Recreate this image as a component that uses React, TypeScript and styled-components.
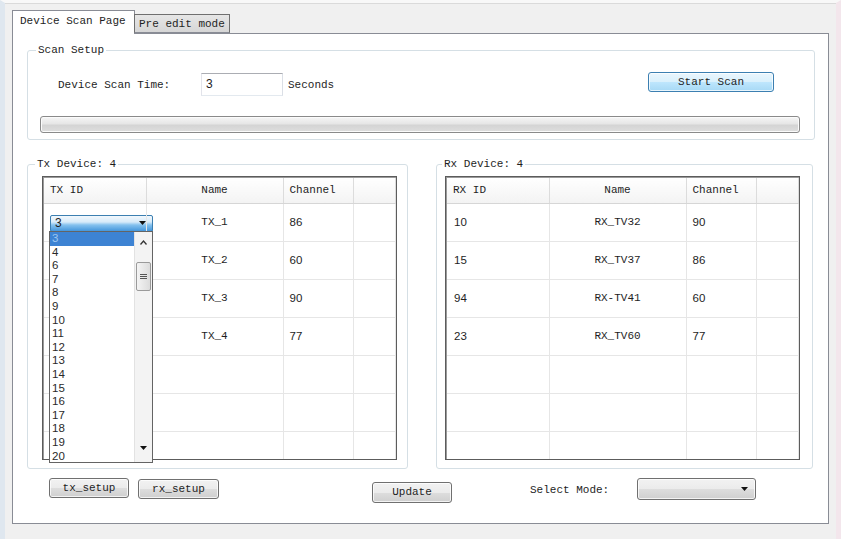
import styled, { createGlobalStyle } from "styled-components"

const GlobalStyle = createGlobalStyle`
  html, body { margin: 0; padding: 0; background: #f0f0f0; }
  body {
    font-family: "Liberation Mono", "DejaVu Sans Mono", monospace;
    font-size: 11px;
    color: #1e1e1e;
  }
  * { box-sizing: border-box; }
`

const txRows = [
  { id: "", name: "TX_1", ch: "86", editing: true },
  { id: "", name: "TX_2", ch: "60" },
  { id: "", name: "TX_3", ch: "90" },
  { id: "", name: "TX_4", ch: "77" },
  { id: "", name: "", ch: "" },
  { id: "", name: "", ch: "" },
  { id: "", name: "", ch: "" },
]

const rxRows = [
  { id: "10", name: "RX_TV32", ch: "90" },
  { id: "15", name: "RX_TV37", ch: "86" },
  { id: "94", name: "RX-TV41", ch: "60" },
  { id: "23", name: "RX_TV60", ch: "77" },
  { id: "", name: "", ch: "" },
  { id: "", name: "", ch: "" },
  { id: "", name: "", ch: "" },
]

const idOptions = ["3", "4", "6", "7", "8", "9", "10", "11", "12", "13", "14", "15", "16", "17", "18", "19", "20"]

type Row = { id: string; name: string; ch: string; editing?: boolean }

const ArrowDown = () => (
  <svg width="7" height="4" viewBox="0 0 7 4">
    <polygon points="0,0 7,0 3.5,4" fill="#111" />
  </svg>
)

const DeviceGrid = ({ idTitle, rows, withPopup }: { idTitle: string; rows: Row[]; withPopup?: boolean }) => (
  <GridWrap>
    <Grid>
      <Table>
        <colgroup>
          <col style={{ width: 102 }} />
          <col style={{ width: 137 }} />
          <col style={{ width: 70 }} />
          <col />
        </colgroup>
        <thead>
          <tr>
            <HeadCell $align="left">{idTitle}</HeadCell>
            <HeadCell $align="center">Name</HeadCell>
            <HeadCell $align="left">Channel</HeadCell>
            <HeadCell $align="left" />
          </tr>
        </thead>
        <tbody>
          {rows.map((r, i) => (
            <tr key={i}>
              <NumCell>
                {r.editing ? (
                  <CellCombo>
                    <span>3</span>
                    <ArrowDown />
                  </CellCombo>
                ) : (
                  r.id
                )}
              </NumCell>
              <NameCell>{r.name}</NameCell>
              <NumCell $pad={6}>{r.ch}</NumCell>
              <NumCell />
            </tr>
          ))}
        </tbody>
      </Table>
    </Grid>
    {withPopup && (
      <Popup>
        <OptionList>
          {idOptions.map((o, i) => (
            <Option key={o} $selected={i === 0}>
              {o}
            </Option>
          ))}
        </OptionList>
        <ScrollBar>
          <svg width="7" height="5" viewBox="0 0 7 5">
            <polyline points="0.5,4.5 3.5,1 6.5,4.5" fill="none" stroke="#333" strokeWidth="1.3" />
          </svg>
          <Thumb>
            <svg width="7" height="7" viewBox="0 0 7 7">
              <path d="M0 1.5H7M0 3.5H7M0 5.5H7" stroke="#555" strokeWidth="1" />
            </svg>
          </Thumb>
          <ScrollDown>
            <ArrowDown />
          </ScrollDown>
        </ScrollBar>
      </Popup>
    )}
  </GridWrap>
)

export default function App() {
  return (
    <>
      <GlobalStyle />
      <Window>
        <TabStrip>
          <Tab $active>Device Scan Page</Tab>
          <Tab>Pre edit mode</Tab>
        </TabStrip>
        <Pane>
          <ScanBox>
            <Legend $left={8}>Scan Setup</Legend>
            <ScanRow>
              <FieldLabel>Device Scan Time:</FieldLabel>
              <TextInput>3</TextInput>
              <Unit>Seconds</Unit>
              <Button $width={126} $height={20} $primary $push>
                Start Scan
              </Button>
            </ScanRow>
            <Progress />
          </ScanBox>

          <DeviceRow>
            <DeviceBox $width={381} $padL={14} $padR={10}>
              <Legend $left={7}>Tx Device: 4</Legend>
              <DeviceGrid idTitle="TX ID" rows={txRows} withPopup />
            </DeviceBox>
            <DeviceBox $width={377} $padL={8} $padR={12}>
              <Legend $left={5}>Rx Device: 4</Legend>
              <DeviceGrid idTitle="RX ID" rows={rxRows} />
            </DeviceBox>
          </DeviceRow>

          <ActionRow>
            <Button $width={80} $height={20}>
              tx_setup
            </Button>
            <Button $width={81} $height={20} $left={9} $top={1}>
              rx_setup
            </Button>
            <Button $width={80} $height={21} $left={153} $top={4}>
              Update
            </Button>
            <ModeLabel>Select Mode:</ModeLabel>
            <ModeCombo>
              <ArrowDown />
            </ModeCombo>
          </ActionRow>
        </Pane>
      </Window>
    </>
  )
}

const Window = styled.div`
  width: 841px;
  height: 539px;
  background: #f0f0f0;
  border-left: 5px solid #dfe7ef;
  border-right: 5px solid #f3e6ec;
  border-top: 3px solid #f8f8f8;
  padding: 7px 7px 0 7px;
  box-shadow: inset 0 1px 0 #dadada;
`

const TabStrip = styled.div`
  display: flex;
  align-items: flex-end;
  height: 23px;
  position: relative;
  z-index: 1;
`

const Tab = styled.div<{ $active?: boolean }>`
  height: ${(p) => (p.$active ? "24px" : "19px")};
  width: ${(p) => (p.$active ? "123px" : "96px")};
  margin-bottom: ${(p) => (p.$active ? "-1px" : "0")};
  margin-left: ${(p) => (p.$active ? "0" : "-1px")};
  padding: ${(p) => (p.$active ? "4px 0 0 7px" : "3px 0 0 4px")};
  background: ${(p) => (p.$active ? "#ffffff" : "linear-gradient(#e6e6e6, #d6d6d6)")};
  border: 1px solid ${(p) => (p.$active ? "#898c95" : "#6f6f6f")};
  border-bottom: ${(p) => (p.$active ? "none" : "1px solid #898c95")};
  line-height: 13px;
  white-space: nowrap;
`

const Pane = styled.div`
  height: 491px;
  background: #ffffff;
  border: 1px solid #898c95;
  padding: 16px 13px 0 14px;
  display: flex;
  flex-direction: column;
`

const GroupBox = styled.div`
  position: relative;
  border: 1px solid #d5dfe5;
  border-radius: 3px;
`

const Legend = styled.span<{ $left: number }>`
  position: absolute;
  top: -7px;
  left: ${(p) => p.$left}px;
  padding: 0 2px;
  background: #ffffff;
  line-height: 13px;
  white-space: nowrap;
`

const ScanBox = styled(GroupBox)`
  height: 90px;
  padding: 21px 14px 0 12px;
`

const ScanRow = styled.div`
  display: flex;
  align-items: center;
  height: 25px;
`

const FieldLabel = styled.span`
  width: 161px;
  padding-left: 18px;
`

const TextInput = styled.div`
  width: 82px;
  height: 23px;
  border: 1px solid;
  border-color: #abadb3 #dbdfe6 #e3e9ef #e2e3ea;
  padding: 3px 0 0 4px;
  font-family: "Liberation Sans", Arial, sans-serif;
  font-size: 12px;
  line-height: 14px;
`

const Unit = styled.span`
  margin-left: 5px;
`

const Button = styled.div<{
  $width: number
  $height: number
  $left?: number
  $top?: number
  $primary?: boolean
  $push?: boolean
}>`
  display: flex;
  align-items: center;
  justify-content: center;
  width: ${(p) => p.$width}px;
  height: ${(p) => p.$height}px;
  margin-left: ${(p) => (p.$push ? "auto" : `${p.$left ?? 0}px`)};
  margin-right: ${(p) => (p.$push ? "26px" : "0")};
  margin-top: ${(p) => p.$top ?? 0}px;
  align-self: flex-start;
  border: 1px solid ${(p) => (p.$primary ? "#3c7fb1" : "#707070")};
  border-radius: 3px;
  background: ${(p) =>
    p.$primary
      ? "linear-gradient(#eaf6fd 0%, #d9f0fc 50%, #bee6fd 51%, #a7d9f5 100%)"
      : "linear-gradient(#f2f2f2 0%, #ebebeb 50%, #dddddd 51%, #cfcfcf 100%)"};
  box-shadow: inset 0 0 0 1px rgba(255, 255, 255, 0.75);
  padding-bottom: 1px;
`

const Progress = styled.div`
  margin-top: 19px;
  height: 17px;
  border: 1px solid #8a8a8a;
  border-radius: 3px;
  background: linear-gradient(#f6f6f6 0%, #e6e6e6 45%, #d4d4d4 55%, #dedede 100%);
  box-shadow: inset 0 0 0 1px #fbfbfb;
`

const DeviceRow = styled.div`
  display: flex;
  gap: 28px;
  margin-top: 24px;
`

const DeviceBox = styled(GroupBox)<{ $width: number; $padL: number; $padR: number }>`
  width: ${(p) => p.$width}px;
  height: 305px;
  padding: 11px ${(p) => p.$padR}px 0 ${(p) => p.$padL}px;
`

const GridWrap = styled.div`
  position: relative;
`

const Grid = styled.div`
  height: 284px;
  overflow: hidden;
  border: 1px solid #5c5c5c;
  box-shadow: inset 1px 1px 0 #9a9a9a;
  padding: 1px 0 0 1px;
  background: #ffffff;
`

const Table = styled.table`
  width: 100%;
  table-layout: fixed;
  border-collapse: collapse;
`

const HeadCell = styled.th<{ $align: "left" | "center" }>`
  height: 25px;
  padding: 0 0 0 ${(p) => (p.$align === "left" ? "6px" : "0")};
  text-align: ${(p) => p.$align};
  font-weight: normal;
  background: linear-gradient(#ffffff, #f3f3f3);
  border-right: 1px solid #dcdcdc;
  border-bottom: 1px solid #d6d6d6;
`

const BodyCell = styled.td`
  height: 38px;
  padding: 0;
  border-right: 1px solid #e6e6e6;
  border-bottom: 1px solid #e6e6e6;
`

const NumCell = styled(BodyCell)<{ $pad?: number }>`
  padding-left: ${(p) => p.$pad ?? 7}px;
  font-family: "Liberation Sans", Arial, sans-serif;
  font-size: 11.5px;
`

const NameCell = styled(BodyCell)`
  text-align: center;
`

const CellCombo = styled.div`
  display: flex;
  align-items: center;
  justify-content: space-between;
  width: 103px;
  height: 17px;
  margin: 2px 0 0 -1px;
  padding: 0 6px 0 4px;
  border: 1px solid #3c7fb1;
  border-radius: 2px;
  background: linear-gradient(#f2f8fd 0%, #d8ebf9 40%, #84c1ee 60%, #4597dc 100%);
  font-size: 12px;
`

const Popup = styled.div`
  position: absolute;
  left: 7px;
  top: 55px;
  width: 104px;
  height: 232px;
  display: flex;
  background: #ffffff;
  border: 1px solid #646464;
  overflow: hidden;
  z-index: 2;
`

const OptionList = styled.div`
  flex: 1;
  font-family: "Liberation Sans", Arial, sans-serif;
  font-size: 11.5px;
`

const Option = styled.div<{ $selected?: boolean }>`
  height: 13.6px;
  line-height: 13.6px;
  padding-left: 2px;
  background: ${(p) => (p.$selected ? "#3d83d3" : "transparent")};
  color: ${(p) => (p.$selected ? "#9fc6f0" : "#2a2a2a")};
`

const ScrollBar = styled.div`
  width: 18px;
  display: flex;
  flex-direction: column;
  align-items: center;
  padding-top: 8px;
  background: #f3f3f3;
  border-left: 1px solid #e2e2e2;
`

const Thumb = styled.div`
  display: flex;
  align-items: center;
  justify-content: center;
  width: 15px;
  height: 29px;
  margin-top: 17px;
  border: 1px solid #9a9a9a;
  border-radius: 2px;
  background: linear-gradient(90deg, #f4f4f4, #dcdcdc);
`

const ScrollDown = styled.div`
  margin-top: auto;
  margin-bottom: 9px;
`

const ActionRow = styled.div`
  display: flex;
  align-items: flex-start;
  margin-top: 9px;
  padding-left: 22px;
`

const ModeLabel = styled.span`
  width: 107px;
  margin: 6px 0 0 78px;
  line-height: 13px;
`

const ModeCombo = styled.div`
  display: flex;
  align-items: center;
  justify-content: flex-end;
  width: 119px;
  height: 22px;
  padding-right: 7px;
  border: 1px solid #707070;
  border-radius: 3px;
  background: linear-gradient(#f2f2f2 0%, #ebebeb 50%, #dddddd 51%, #cfcfcf 100%);
  box-shadow: inset 0 0 0 1px rgba(255, 255, 255, 0.75);
`
